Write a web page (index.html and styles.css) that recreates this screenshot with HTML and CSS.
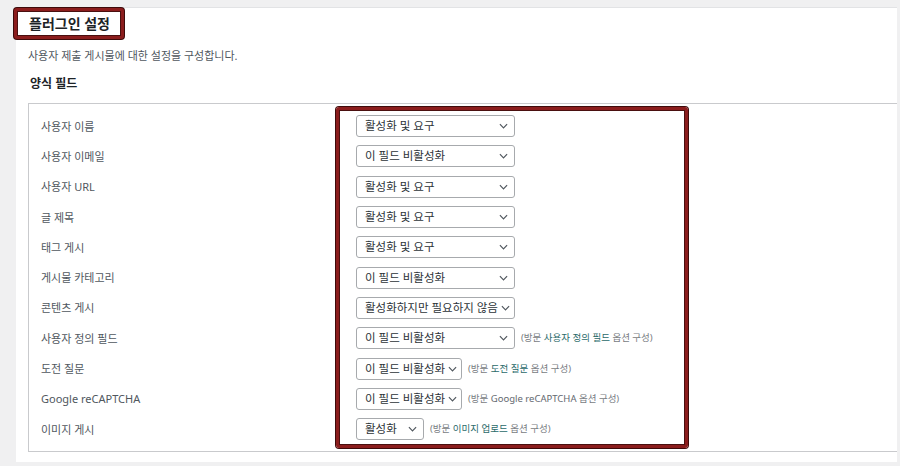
FILE: index.html
```html
<!DOCTYPE html>
<html lang="ko">
<head>
<meta charset="utf-8">
<title>플러그인 설정</title>
<link rel="stylesheet" href="styles.css">
</head>
<body>
<div class="page">
  <div class="panel">
    <h2 class="title">플러그인 설정</h2>
    <p class="desc">사용자 제출 게시물에 대한 설정을 구성합니다.</p>
    <h3 class="section">양식 필드</h3>
    <div class="table">
      <div class="highlight"></div>
      <div class="row"><div class="label">사용자 이름</div><div class="field"><div class="select w-full"><span>활성화 및 요구</span><svg class="chev" viewBox="0 0 10 6"><path d="M1 1 L5 5 L9 1"/></svg></div></div></div>
      <div class="row"><div class="label">사용자 이메일</div><div class="field"><div class="select w-full"><span>이 필드 비활성화</span><svg class="chev" viewBox="0 0 10 6"><path d="M1 1 L5 5 L9 1"/></svg></div></div></div>
      <div class="row"><div class="label">사용자 URL</div><div class="field"><div class="select w-full"><span>활성화 및 요구</span><svg class="chev" viewBox="0 0 10 6"><path d="M1 1 L5 5 L9 1"/></svg></div></div></div>
      <div class="row"><div class="label">글 제목</div><div class="field"><div class="select w-full"><span>활성화 및 요구</span><svg class="chev" viewBox="0 0 10 6"><path d="M1 1 L5 5 L9 1"/></svg></div></div></div>
      <div class="row"><div class="label">태그 게시</div><div class="field"><div class="select w-full"><span>활성화 및 요구</span><svg class="chev" viewBox="0 0 10 6"><path d="M1 1 L5 5 L9 1"/></svg></div></div></div>
      <div class="row"><div class="label">게시물 카테고리</div><div class="field"><div class="select w-full"><span>이 필드 비활성화</span><svg class="chev" viewBox="0 0 10 6"><path d="M1 1 L5 5 L9 1"/></svg></div></div></div>
      <div class="row"><div class="label">콘텐츠 게시</div><div class="field"><div class="select w-full tight"><span>활성화하지만 필요하지 않음</span><svg class="chev" viewBox="0 0 10 6"><path d="M1 1 L5 5 L9 1"/></svg></div></div></div>
      <div class="row"><div class="label">사용자 정의 필드</div><div class="field"><div class="select w-full"><span>이 필드 비활성화</span><svg class="chev" viewBox="0 0 10 6"><path d="M1 1 L5 5 L9 1"/></svg></div><span class="note">(방문 <a class="link">사용자 정의 필드</a> 옵션 구성)</span></div></div>
      <div class="row"><div class="label">도전 질문</div><div class="field"><div class="select w-mid tight"><span>이 필드 비활성화</span><svg class="chev" viewBox="0 0 10 6"><path d="M1 1 L5 5 L9 1"/></svg></div><span class="note">(방문 <a class="link">도전 질문</a> 옵션 구성)</span></div></div>
      <div class="row"><div class="label">Google reCAPTCHA</div><div class="field"><div class="select w-mid tight"><span>이 필드 비활성화</span><svg class="chev" viewBox="0 0 10 6"><path d="M1 1 L5 5 L9 1"/></svg></div><span class="note">(방문 <a class="link plain">Google reCAPTCHA</a> 옵션 구성)</span></div></div>
      <div class="row"><div class="label">이미지 게시</div><div class="field"><div class="select w-small"><span>활성화</span><svg class="chev" viewBox="0 0 10 6"><path d="M1 1 L5 5 L9 1"/></svg></div><span class="note">(방문 <a class="link">이미지 업로드</a> 옵션 구성)</span></div></div>
    </div>
  </div>
</div>
</body>
</html>
```

FILE: styles.css
```css
* { box-sizing: border-box; }
html, body { margin: 0; padding: 0; }
body {
  background: #f0f0f1;
  font-family: "Noto Sans", "Noto Sans CJK KR", sans-serif;
  color: #3c434a;
  width: 900px;
  height: 466px;
  overflow: hidden;
}
.page {
  padding: 7px 3px 0 16px;
}
.panel {
  background: #ffffff;
  height: 455px;
  padding: 0 0 0 12px;
  border-top: 1px solid #e2e3e5;
}
.title {
  display: inline-block;
  margin: 0 0 0 -14px;
  padding: 3px 11px 3px 12px;
  font-size: 14px;
  line-height: 19px;
  font-weight: 700;
  color: #1d2327;
  border: 3px solid #8b1d1d;
  border-radius: 3px;
  box-shadow: 0 0 0 1px #3e0b0b, inset 0 0 0 1px #4a1010;
  background: #ffffff;
}
.desc {
  margin: 9px 0 0 0;
  font-size: 11px;
  line-height: 16px;
  color: #50575e;
}
.section {
  margin: 11px 0 0 2px;
  font-size: 12px;
  line-height: 17px;
  font-weight: 700;
  color: #1d2327;
}
.table {
  position: relative;
  margin-top: 11px;
  border: 1px solid #c9cacd;
  border-right: none;
  padding: 7px 0 7px 12px;
  height: 349px;
}
.highlight {
  position: absolute;
  left: 307px;
  top: 3px;
  width: 352px;
  height: 341px;
  border: 3px solid #8b1d1d;
  border-radius: 3px;
  box-shadow: 0 0 0 1px #3e0b0b, inset 0 0 0 1px #4a1010;
  pointer-events: none;
}
.row {
  display: flex;
  align-items: center;
  height: 30.3px;
}
.label {
  width: 315px;
  padding-top: 1px;
  font-size: 11px;
  line-height: 16px;
  color: #50575e;
}
.field {
  display: flex;
  align-items: center;
}
.select {
  display: flex;
  align-items: center;
  justify-content: space-between;
  height: 22px;
  border: 1px solid #a7aaad;
  border-radius: 3px;
  padding: 0 6px 0 8px;
  font-size: 11.5px;
  color: #2c3338;
  background: #ffffff;
  white-space: nowrap;
  overflow: hidden;
}
.select span { line-height: 20px; }
.select.tight { padding-right: 5px; }
.w-full { width: 159px; }
.w-mid { width: 106px; }
.w-small { width: 68px; }
.chev {
  width: 9px;
  height: 6px;
  flex: none;
  margin-left: 3px;
}
.chev path {
  fill: none;
  stroke: #50575e;
  stroke-width: 1.3;
}
.note {
  margin-left: 6px;
  font-size: 9.5px;
  line-height: 14px;
  color: #787c82;
}
.link {
  color: #2a6a6a;
}
.link.plain {
  color: #646970;
}
```
